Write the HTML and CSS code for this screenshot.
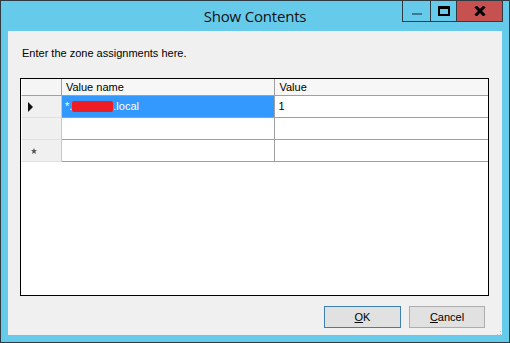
FILE: index.html
```html
<!DOCTYPE html>
<html lang="en">
<head>
<meta charset="UTF-8">
<title>Show Contents</title>
<link rel="stylesheet" href="styles.css">
</head>
<body>

<div class="window">
    <div class="titlebar">
        <div class="title">Show Contents</div>
        <div class="caption-buttons">
            <div class="cap-btn minimize"><span class="min-bar"></span></div>
            <div class="cap-btn maximize"><span class="max-box"></span></div>
            <div class="cap-btn close">
                <svg width="12" height="10" viewBox="0 0 12 10">
                    <path d="M1.5 0.5 L10.5 9.5 M10.5 0.5 L1.5 9.5" stroke="#000" stroke-width="3" fill="none"/>
                </svg>
            </div>
        </div>
    </div>

    <div class="client">
        <p class="prompt">Enter the zone assignments here.</p>

        <div class="grid">
            <div class="row header-row">
                <div class="cell row-head"></div>
                <div class="cell col-name">Value name</div>
                <div class="cell col-value">Value</div>
            </div>
            <div class="row">
                <div class="cell row-head">
                    <svg width="6" height="10" viewBox="0 0 6 10"><path d="M0 0 L5 5 L0 10 Z" fill="#111"/></svg>
                </div>
                <div class="cell col-name selected">*.<span class="redacted"></span>.local</div>
                <div class="cell col-value">1</div>
            </div>
            <div class="row">
                <div class="cell row-head"></div>
                <div class="cell col-name"></div>
                <div class="cell col-value"></div>
            </div>
            <div class="row">
                <div class="cell row-head">
                    <svg width="6" height="6" viewBox="0 0 6 6"><path d="M3 0 L3.8 2 L6 2.2 L4.3 3.6 L4.9 6 L3 4.7 L1.1 6 L1.7 3.6 L0 2.2 L2.2 2 Z" fill="#555"/></svg>
                </div>
                <div class="cell col-name"></div>
                <div class="cell col-value"></div>
            </div>
        </div>

        <div class="buttons">
            <button class="btn default"><u>O</u>K</button>
            <button class="btn"><u>C</u>ancel</button>
        </div>

        <div class="grip">
            <svg width="10" height="10" viewBox="0 0 10 10">
                <rect x="8" y="2" width="1" height="1" fill="#b8b8b8"/>
                <rect x="5" y="5" width="1" height="1" fill="#b8b8b8"/>
                <rect x="8" y="5" width="1" height="1" fill="#b8b8b8"/>
                <rect x="2" y="8" width="1" height="1" fill="#b8b8b8"/>
                <rect x="5" y="8" width="1" height="1" fill="#b8b8b8"/>
                <rect x="8" y="8" width="1" height="1" fill="#b8b8b8"/>
            </svg>
        </div>
    </div>
</div>

</body>
</html>
```

FILE: styles.css
```css
/* --- Page --- */
body {
    margin:0;
    padding:0;
    background:#ffffff;
    font-family: 'Liberation Sans', Arial, sans-serif;
}

/* --- Window frame --- */
.window {
    width:510px;
    height:343px;
    box-sizing:border-box;
    background:#66cbea;
    border:1px solid #2e3b42;
    display:flex;
    flex-direction:column;
}

.titlebar {
    position:relative;
    height:30px;
    flex-shrink:0;
}

.title {
    text-align:center;
    font-family: 'Open Sans', 'Noto Sans', sans-serif;
    font-size:15px;
    line-height:30px;
    color:#111;
    letter-spacing:-0.2px;
}

/* --- Caption buttons --- */
.caption-buttons {
    position:absolute;
    top:-1px;
    right:6px;
    display:flex;
    height:21px;
}

.cap-btn {
    height:20px;
    border:1px solid #2e3b42;
    border-right:none;
    display:flex;
    justify-content:center;
    align-items:center;
}
.minimize { width:27px; }
.maximize { width:25px; }
.close { width:45px; background:#c75050; border-right:1px solid #2e3b42; }

.min-bar {
    width:10px;
    height:2px;
    background:#3a7a92;
    margin-top:6px;
}
.max-box {
    width:8px;
    height:5px;
    border:2px solid #000;
    border-top-width:3px;
    margin-top:-1px;
}

/* --- Client area --- */
.client {
    position:relative;
    flex:1;
    margin:0 7px 7px 7px;
    background:#f0f0f0;
    display:flex;
    flex-direction:column;
}

.prompt {
    margin:16px 0 0 14px;
    font-size:11px;
    line-height:13px;
    color:#000;
}

/* --- Data grid --- */
.grid {
    margin:18px 0 0 12px;
    width:469px;
    height:218px;
    box-sizing:border-box;
    border:1px solid #000;
    background:#fff;
}

.row {
    display:flex;
    height:22px;
}
.header-row { height:17px; }

.cell {
    box-sizing:border-box;
    height:100%;
    border-right:1px solid #a0a0a0;
    border-bottom:1px solid #a0a0a0;
    font-size:11px;
    line-height:20px;
    padding-left:3px;
    color:#000;
    white-space:nowrap;
}

.row-head {
    width:41px;
    background:#f0f0f0;
    border-right:1px solid #c8c8c8;
    border-bottom:1px solid #e0e0e0;
    border-left:1px solid #fff;
    display:flex;
    align-items:center;
    padding-left:6px;
}
.header-row .cell {
    background:#f7f7f7;
    line-height:16px;
    border-bottom:1px solid #a0a0a0;
    padding-left:4px;
}
.header-row .row-head {
    background:#f5f5f5;
    border-right:1px solid #a0a0a0;
}
.row:last-child .row-head { padding-left:9px; }

.col-name { width:214px; }
.col-value { width:213px; border-right:none; }

.selected {
    background:#3399ff;
    color:#fff;
    border-bottom-color:#a0a0a0;
}

.redacted {
    display:inline-block;
    width:41px;
    height:11px;
    background:#ee1c24;
    vertical-align:-2px;
    border-radius:2px;
}

/* --- Buttons --- */
.buttons {
    display:flex;
    justify-content:flex-end;
    gap:8px;
    margin:10px 17px 0 0;
}

.btn {
    width:77px;
    height:22px;
    box-sizing:border-box;
    background:#e1e1e1;
    border:1px solid #adadad;
    font-family: 'Liberation Sans', Arial, sans-serif;
    font-size:11px;
    color:#000;
    padding:0;
}
.btn.default { border-color:#3c7fb1; }
.btn + .btn { width:76px; }

.grip {
    position:absolute;
    right:0;
    bottom:0;
    width:10px;
    height:10px;
}
```
